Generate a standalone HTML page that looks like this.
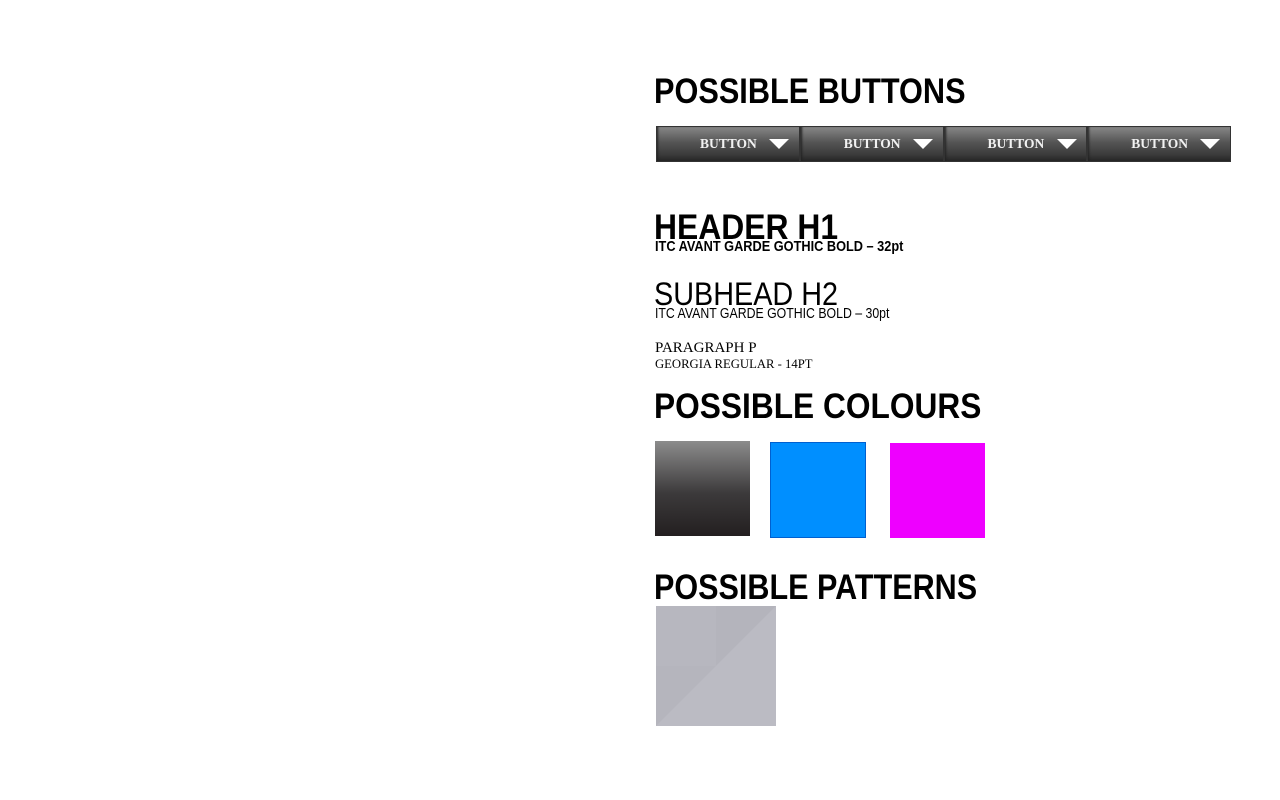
<!DOCTYPE html>
<html><head><meta charset="utf-8"><style>
body{margin:0;width:1280px;height:800px;background:#fff;position:relative;overflow:hidden;font-family:"Liberation Sans",sans-serif;color:#000}
.a{position:absolute;white-space:nowrap;transform-origin:0 0;line-height:1}
.big{font-weight:bold;font-size:35px}
.btns{position:absolute;left:656px;top:126px;width:575px;height:36px;display:flex}
.b{flex:1;height:36px;background:linear-gradient(#8a8a8a,#555 45%,#3a3a3a 80%,#222);box-shadow:inset 0 0 0 1px #333,inset 2px 0 2px #222;position:relative;color:#f2f2f2;font-family:"Liberation Serif",serif;font-weight:bold;font-size:13.5px}
.b span{position:absolute;left:44px;top:10px}
.b i{position:absolute;left:113px;top:13px;width:0;height:0;border-left:10px solid transparent;border-right:10px solid transparent;border-top:10px solid #fff}
</style></head><body>
<div class="a big" style="left:654px;top:74px;transform:scaleX(0.877)">POSSIBLE BUTTONS</div>
<div class="btns"><div class="b"><span>BUTTON</span><i></i></div><div class="b"><span>BUTTON</span><i></i></div><div class="b"><span>BUTTON</span><i></i></div><div class="b"><span>BUTTON</span><i></i></div></div>
<div class="a big" style="left:654px;top:210px;transform:scaleX(0.91)">HEADER H1</div>
<div class="a" style="left:655px;top:239px;font-weight:bold;font-size:15px;transform:scaleX(0.85)">ITC AVANT GARDE GOTHIC BOLD – 32pt</div>
<div class="a" style="left:654px;top:278px;font-size:32px;transform:scaleX(0.9)">SUBHEAD H2</div>
<div class="a" style="left:655px;top:306px;font-size:15px;transform:scaleX(0.82)">ITC AVANT GARDE GOTHIC BOLD – 30pt</div>
<div class="a" style="left:655px;top:341px;font-family:'Liberation Serif',serif;font-size:15px">PARAGRAPH P</div>
<div class="a" style="left:655px;top:358px;font-family:'Liberation Serif',serif;font-size:12.7px">GEORGIA REGULAR - 14PT</div>
<div class="a big" style="left:654px;top:389px;transform:scaleX(0.905)">POSSIBLE COLOURS</div>
<div style="position:absolute;left:655px;top:441px;width:95px;height:95px;background:linear-gradient(#8c8c8c,#3c3a3b 55%,#231f20)"></div>
<div style="position:absolute;left:770px;top:442px;width:94px;height:94px;background:#008fff;border:1px solid #0060d0"></div>
<div style="position:absolute;left:890px;top:443px;width:95px;height:95px;background:#ee00ff"></div>
<div class="a big" style="left:654px;top:570px;transform:scaleX(0.873)">POSSIBLE PATTERNS</div>
<svg style="position:absolute;left:656px;top:606px" width="120" height="120"><rect width="120" height="120" fill="#b9b9c1"/><rect width="60" height="60" fill="#b7b7bf"/><rect x="60" width="60" height="60" fill="#b4b4bc"/><rect y="60" width="60" height="60" fill="#b5b5bd"/><polygon points="0,120 120,0 120,120" fill="#bbbbc3"/></svg>
</body></html>
